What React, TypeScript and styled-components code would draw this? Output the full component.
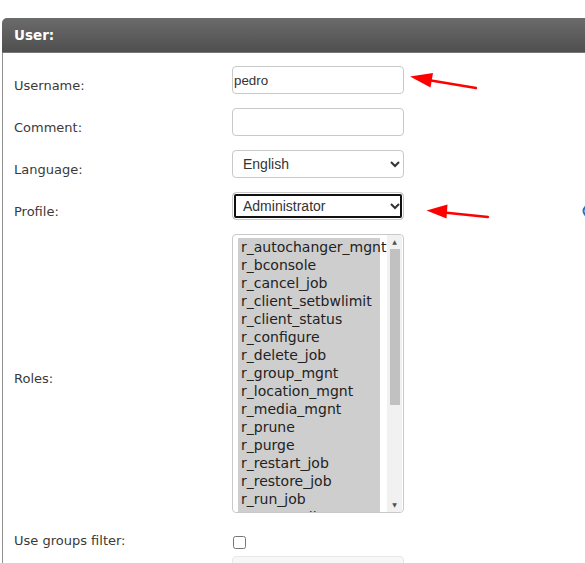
import React from 'react'
import styled, { createGlobalStyle } from 'styled-components'

const GlobalStyle = createGlobalStyle`
  html, body {
    margin: 0;
    padding: 0;
    background: #ffffff;
    overflow: hidden;
  }
  body {
    font-family: 'DejaVu Sans', Verdana, sans-serif;
  }
`

const roles = [
  'r_autochanger_mgnt',
  'r_bconsole',
  'r_cancel_job',
  'r_client_setbwlimit',
  'r_client_status',
  'r_configure',
  'r_delete_job',
  'r_group_mgnt',
  'r_location_mgnt',
  'r_media_mgnt',
  'r_prune',
  'r_purge',
  'r_restart_job',
  'r_restore_job',
  'r_run_job',
  'r_status_dir',
]

const App: React.FC = () => {
  return (
    <Page>
      <GlobalStyle />
      <Panel>
        <PanelHeader>User:</PanelHeader>
        <PanelBody>
          <FieldRow>
            <FieldLabel>Username:</FieldLabel>
            <TextInput type="text" defaultValue="pedro" />
          </FieldRow>
          <FieldRow>
            <FieldLabel>Comment:</FieldLabel>
            <TextInput type="text" defaultValue="" />
          </FieldRow>
          <FieldRow>
            <FieldLabel>Language:</FieldLabel>
            <Select defaultValue="en">
              <option value="en">English</option>
            </Select>
          </FieldRow>
          <FieldRow>
            <FieldLabel>Profile:</FieldLabel>
            <Select defaultValue="admin" $focused>
              <option value="admin">Administrator</option>
            </Select>
            <HelpIcon viewBox="0 0 14 14">
              <circle cx="7" cy="7" r="5.5" fill="none" stroke="#2f6fb5" strokeWidth="2" />
            </HelpIcon>
          </FieldRow>
          <FieldRow>
            <FieldLabel>Roles:</FieldLabel>
            <ListBox>
              <OptionList>
                {roles.map((role) => (
                  <OptionItem key={role}>{role}</OptionItem>
                ))}
              </OptionList>
              <ScrollBar>
                <ScrollArrow>▲</ScrollArrow>
                <ScrollThumb />
                <ScrollTrack />
                <ScrollArrow>▼</ScrollArrow>
              </ScrollBar>
            </ListBox>
          </FieldRow>
          <FieldRow $padBottom={0}>
            <FieldLabel $shift={6}>Use groups filter:</FieldLabel>
            <CheckboxCell>
              <Checkbox type="checkbox" />
            </CheckboxCell>
          </FieldRow>
          <FieldRow>
            <FieldLabel />
            <Select disabled defaultValue="">
              <option value=""></option>
            </Select>
          </FieldRow>
        </PanelBody>
      </Panel>
      <Annotations viewBox="0 0 585 563">
        <line x1="476" y1="88" x2="428" y2="80" stroke="#ff0000" strokeWidth="2.4" strokeLinecap="round" />
        <polygon points="410,76.5 433,73 430.5,87.5" fill="#ff0000" />
        <line x1="488" y1="217" x2="444" y2="212.5" stroke="#ff0000" strokeWidth="2.4" strokeLinecap="round" />
        <polygon points="426.5,210.5 447.5,204.5 446.5,218.5" fill="#ff0000" />
      </Annotations>
    </Page>
  )
}

export default App

const Page = styled.div`
  position: relative;
  width: 585px;
  height: 563px;
  overflow: hidden;
  padding: 18px 0 0 2px;
  box-sizing: border-box;
`

const Panel = styled.section`
  width: 660px;
`

const PanelHeader = styled.h2`
  margin: 0;
  height: 35px;
  padding-left: 12px;
  display: flex;
  align-items: center;
  border-radius: 5px 5px 0 0;
  background: linear-gradient(#6b6b6b, #4f4f4f);
  border-bottom: 1px solid #777;
  box-sizing: border-box;
  color: #ffffff;
  font-size: 13.5px;
  font-weight: bold;
  font-family: 'DejaVu Sans', Verdana, sans-serif;
`

const PanelBody = styled.div`
  border-left: 1px solid #8e8e8e;
  padding-top: 6px;
  min-height: 520px;
`

const FieldRow = styled.div<{ $padBottom?: number }>`
  display: flex;
  align-items: center;
  padding: 7px 0 ${({ $padBottom }) => ($padBottom ?? 7)}px 0;
`

const FieldLabel = styled.label<{ $shift?: number }>`
  flex: 0 0 218px;
  padding: ${({ $shift }) => ($shift ?? 11)}px 0 0 11px;
  font-size: 13px;
  line-height: 16px;
  color: #3a3a3a;
`

const TextInput = styled.input`
  width: 172px;
  height: 28px;
  box-sizing: border-box;
  margin: 0;
  padding: 0 1px;
  border: 1px solid #c9c9c9;
  border-radius: 4px;
  font-family: 'Liberation Sans', Arial, sans-serif;
  font-size: 13.333px;
  color: #333;
  background: #fff;
  outline: none;
`

const Select = styled.select<{ $focused?: boolean }>`
  width: 172px;
  height: 28px;
  box-sizing: border-box;
  margin: 0;
  padding: 0 4px 0 6px;
  border: 1px solid #c9c9c9;
  border-radius: 4px;
  font-family: 'Liberation Sans', Arial, sans-serif;
  font-size: 14px;
  color: #333;
  background: #fff;
  outline: none;
  box-shadow: ${({ $focused }) =>
    $focused ? 'inset 0 0 0 1px #fff, inset 0 0 0 3px #111' : 'none'};

  &:disabled {
    background: #f4f4f4;
    border-color: #dedede;
  }
`

const HelpIcon = styled.svg`
  flex: 0 0 14px;
  width: 14px;
  height: 14px;
  margin: 10px 0 0 178px;
`

const ListBox = styled.div`
  display: flex;
  width: 172px;
  height: 279px;
  box-sizing: border-box;
  border: 1px solid #c9c9c9;
  border-radius: 4px;
  overflow: hidden;
  background: #fff;
`

const OptionList = styled.ul`
  flex: 0 0 142px;
  min-width: 0;
  list-style: none;
  margin: 0;
  padding: 3px 0 0 5px;
`

const OptionItem = styled.li`
  height: 18px;
  line-height: 18px;
  padding-left: 3px;
  white-space: nowrap;
  background: #cecece;
  color: #222;
  font-size: 14px;
  font-family: 'DejaVu Sans', Verdana, sans-serif;
`

const ScrollBar = styled.div`
  position: relative;
  flex: 0 0 15px;
  margin-left: auto;
  margin-right: 1px;
  display: flex;
  flex-direction: column;
  align-items: center;
  background: #f1f1f1;
`

const ScrollArrow = styled.div`
  flex: 0 0 14px;
  width: 14px;
  display: flex;
  align-items: center;
  justify-content: center;
  font-size: 6px;
  color: #505050;
  line-height: 1;
`

const ScrollThumb = styled.div`
  flex: 0 0 156px;
  width: 10px;
  background: #c1c1c1;
`

const ScrollTrack = styled.div`
  flex: 1;
`

const CheckboxCell = styled.div`
  padding-top: 9px;
  display: flex;
`

const Checkbox = styled.input`
  width: 13px;
  height: 13px;
  margin: 0 0 0 1px;
`

const Annotations = styled.svg`
  position: absolute;
  left: 0;
  top: 0;
  width: 585px;
  height: 563px;
  pointer-events: none;
`
